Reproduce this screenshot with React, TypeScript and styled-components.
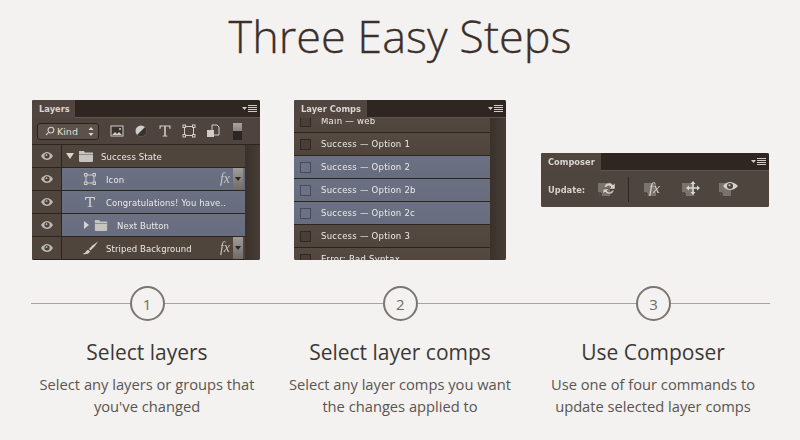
import React from "react";
import styled, { createGlobalStyle } from "styled-components";

const Global = createGlobalStyle`
  html, body { margin: 0; padding: 0; background: #f3f2f0; }
  body { width: 800px; height: 440px; overflow: hidden; font-family: "Open Sans", "Liberation Sans", sans-serif; }
`;

const Page = styled.main`
  width: 800px;
  height: 440px;
  display: flex;
  flex-direction: column;
`;

const Title = styled.h1`
  margin: 0;
  height: 100px;
  padding-top: 6px;
  box-sizing: border-box;
  text-align: center;
  font-size: 45px;
  line-height: 60px;
  font-weight: 300;
  -webkit-text-stroke: 0.3px #3a2f2a;
  color: #3a2f2a;
`;

const PanelRow = styled.section`
  display: flex;
  align-items: center;
  height: 160px;
  padding-left: 32px;
  gap: 34px;
`;

const Panel = styled.div<{ $w: number; $h: number; $ml?: number }>`
  width: ${(p) => p.$w}px;
  height: ${(p) => p.$h}px;
  margin-left: ${(p) => p.$ml ?? 0}px;
  display: flex;
  flex-direction: column;
  flex: none;
  background: linear-gradient(90deg, #4a4038, #463c35);
  border-radius: 2px;
  overflow: hidden;
  font-family: "DejaVu Sans", "Liberation Sans", sans-serif;
  color: #e4e1de;
  filter: blur(0.3px);
`;

const TabStrip = styled.div`
  height: 18px;
  flex: none;
  display: flex;
  align-items: stretch;
  justify-content: space-between;
  background: #2f2622;
  border-bottom: 1px solid #5f564f;
  box-sizing: border-box;
`;

const Tab = styled.div<{ $w: number }>`
  width: ${(p) => p.$w}px;
  background: #50463f;
  margin-bottom: -1px;
  font-size: 8.3px;
  font-weight: 700;
  line-height: 18px;
  padding-left: 7px;
  box-sizing: border-box;
  color: #d8d5d2;
  white-space: nowrap;
`;

const MenuGlyph = styled.svg`
  width: 16px;
  height: 8px;
  margin: 5px 2px 0 0;
`;

const Toolbar = styled.div`
  height: 27px;
  flex: none;
  display: flex;
  align-items: center;
  padding-left: 5px;
  background: #4e443d;
  border-bottom: 1px solid #2c2521;
  box-sizing: border-box;
`;

const KindButton = styled.div`
  width: 62px;
  height: 17px;
  box-sizing: border-box;
  display: flex;
  align-items: center;
  gap: 2px;
  padding: 0 4px 0 7px;
  background: #5d5249;
  border: 1px solid #29211d;
  border-radius: 3px;
  font-size: 9.5px;
  color: #e0ddda;
  margin-right: 11px;
`;

const Spacer = styled.span`
  flex: 1;
`;

const ToolIcon = styled.svg`
  width: 14px;
  height: 14px;
  margin-right: 10px;
  flex: none;
`;

const ToggleTrack = styled.div`
  width: 9px;
  height: 17px;
  display: flex;
  flex-direction: column;
  background: #2c2622;
  margin-left: 3px;
`;

const ToggleKnob = styled.div`
  height: 8px;
  background: linear-gradient(#a8a4a0, #8a8580);
`;

const ListWrap = styled.div`
  flex: 1;
  display: flex;
  min-height: 0;
  overflow: hidden;
`;

const List = styled.div<{ $w: number; $shift?: number }>`
  width: ${(p) => p.$w}px;
  flex: none;
  margin-top: ${(p) => p.$shift ?? 0}px;
`;

const LayerRow = styled.div<{ $sel?: boolean }>`
  height: 23px;
  display: flex;
  box-sizing: border-box;
  border-bottom: 1px solid #2b2522;
  background: ${(p) => (p.$sel ? "linear-gradient(#6b7082, #676c7e)" : "#50453d")};
`;

const EyeCell = styled.div`
  width: 30px;
  flex: none;
  background: #50453d;
  border-right: 1px solid #2b2522;
  display: flex;
  align-items: center;
  justify-content: center;
  box-sizing: border-box;
`;

const LayerBody = styled.div<{ $pl: number }>`
  flex: 1;
  min-width: 0;
  display: flex;
  align-items: center;
  padding-left: ${(p) => p.$pl}px;
  font-size: 8.5px;
  color: #eceae8;
  white-space: nowrap;
`;

const Name = styled.span<{ $ml: number }>`
  margin-left: ${(p) => p.$ml}px;
  letter-spacing: 0.1px;
  padding-top: 2px;
`;

const Fx = styled.span`
  font-family: "Liberation Serif", serif;
  font-style: italic;
  font-size: 14px;
  color: #c9c5c2;
  margin-right: 3px;
`;

const FxStub = styled.div`
  width: 10px;
  height: 100%;
  flex: none;
  margin-right: 2px;
  background: linear-gradient(#a09c98, #6f6a66);
  display: flex;
  align-items: center;
  justify-content: center;
`;

const CompRow = styled.div<{ $sel?: boolean }>`
  height: 23px;
  display: flex;
  align-items: center;
  gap: 10px;
  padding-left: 6px;
  box-sizing: border-box;
  border-bottom: 1px solid #2b2522;
  background: ${(p) => (p.$sel ? "linear-gradient(#6b7082, #676c7e)" : "linear-gradient(#554a42, #50453d)")};
  font-size: 8.5px;
  letter-spacing: 0.25px;
  color: #eceae8;
  white-space: nowrap;
`;

const Check = styled.div<{ $sel?: boolean }>`
  width: 11px;
  height: 11px;
  flex: none;
  border: 1px solid ${(p) => (p.$sel ? "#464b5a" : "#2f2824")};
  background: ${(p) => (p.$sel ? "#6d7386" : "#493f38")};
  box-sizing: border-box;
`;

const ScrollGutter = styled.div`
  flex: 1;
  background: linear-gradient(90deg, #3a312b, #473d36);
`;

const ComposerBody = styled.div`
  flex: 1;
  display: flex;
  align-items: center;
  padding-left: 7px;
  background: #4e453e;
`;

const UpdateLabel = styled.span`
  font-size: 8.3px;
  font-weight: 700;
  color: #d4d0cd;
  width: 48px;
  padding-top: 2px;
`;

const ComposerIcon = styled.svg<{ $mr: number }>`
  width: 22px;
  height: 20px;
  margin-right: ${(p) => p.$mr}px;
  flex: none;
`;

const Divider = styled.div`
  width: 1px;
  height: 25px;
  background: #2c2521;
  margin-right: 13px;
`;

const Rail = styled.div`
  position: relative;
  margin: 26px 30px 0 31px;
  height: 35px;
  display: flex;
  justify-content: space-between;
  padding: 0 99px 0 98.5px;
  flex: none;
  &::before {
    content: "";
    position: absolute;
    left: 0;
    right: 0;
    top: 17px;
    height: 1px;
    background: #a8a39e;
  }
`;

const Circle = styled.div`
  position: relative;
  width: 35px;
  height: 35px;
  box-sizing: border-box;
  border: 2px solid #7c7570;
  border-radius: 50%;
  background: #f3f2f0;
  display: flex;
  align-items: center;
  justify-content: center;
  font-size: 15px;
  color: #6f6a65;
`;

const Steps = styled.section`
  display: grid;
  grid-template-columns: repeat(3, 253px);
  justify-content: center;
  margin-top: 17px;
`;

const Step = styled.article`
  text-align: center;
`;

const StepTitle = styled.h2`
  margin: 0 0 7px;
  font-size: 21px;
  line-height: 28px;
  font-weight: 400;
  color: #3d3836;
`;

const StepText = styled.p`
  margin: 0;
  font-size: 14.7px;
  line-height: 22px;
  color: #5a5552;
`;

const Menu = () => (
  <MenuGlyph viewBox="0 0 16 8">
    <path d="M0 2h5L2.500 5z" fill="#cfccc9" />
    <path d="M6 .5h9M6 2.500h9M6 4.500h9M6 6.500h9" stroke="#cfccc9" strokeWidth="1" />
  </MenuGlyph>
);

const Eye = () => (
  <svg width="14" height="10" viewBox="0 0 14 10">
    <path d="M1 5c2-3 4-4 6-4s4 1 6 4c-2 3-4 4-6 4S3 8 1 5z" fill="#bdb9b5" />
    <circle cx="7" cy="4.800" r="2.600" fill="#4a403a" />
    <circle cx="6.500" cy="4.200" r="0.900" fill="#bdb9b5" />
  </svg>
);

const Folder = ({ w = 14 }: { w?: number }) => (
  <svg width={w} height="12" viewBox="0 0 16 12" preserveAspectRatio="none">
    <path d="M1 1h5l1 1.400h8V11a1 1 0 0 1-1 1H2a1 1 0 0 1-1-1z" fill="#c6c3c0" />
    <path d="M1 4.500h14" stroke="#8f8b87" strokeWidth="1" />
  </svg>
);

const LeadGap = styled.span<{ $w: number }>`
  width: ${(p) => p.$w}px;
  flex: none;
`;

const TransformIcon = ({ color = "#cfccc9" }: { color?: string }) => (
  <svg width="12" height="12" viewBox="0 0 12 12" fill="none" stroke={color}>
    <rect x="2" y="2" width="8" height="8" />
    {[[0.5, 0.5], [9, 0.5], [0.5, 9], [9, 9]].map(([x, y]) => (
      <rect key={`${x}-${y}`} x={x} y={y} width="2.500" height="2.500" fill="#6a7085" />
    ))}
  </svg>
);

const SmallTri = ({ dir }: { dir: "down" | "right" }) => (
  <svg width="8" height="8" viewBox="0 0 8 8" fill="#d6d3d0">
    <path d={dir === "down" ? "M0 1h8L4 7z" : "M1 0l5 4-5 4z"} />
  </svg>
);

const StubArrow = () => (
  <svg width="6" height="4" viewBox="0 0 6 4">
    <path d="M0 0h6L3 4z" fill="#2b2522" />
  </svg>
);

const BrushIcon = () => (
  <svg width="17" height="14" viewBox="0 0 17 14">
    <path d="M16 .5C12 3 9 5.500 7 8l1.500 1.500C11 7 14 4 16 .5z" fill="#d0cdca" />
    <path d="M6.300 8.700c-2 .2-2.300 2-3.300 3L.5 13c2.500.5 6.500.3 7.500-2.500z" fill="#d0cdca" />
  </svg>
);

const DocBase = () => (
  <>
    <path d="M2 4h12v13H5l-3-3z" fill="#7a726c" />
    <path d="M2 14h3v3" fill="none" stroke="#2f2824" strokeWidth="1" />
  </>
);

const layers = [
  { sel: false, pl: 4, name: "Success State", lead: <><SmallTri dir="down" /><LeadGap $w={4} /><Folder w={16} /></>, ml: 7, fx: false },
  { sel: true, pl: 22, name: "Icon", lead: <TransformIcon />, ml: 10, fx: true },
  { sel: true, pl: 22, name: "Congratulations! You have..", lead: <svg width="12" height="12" viewBox="0 0 12 12"><path d="M1 1h10v3h-.8l-.6-2H6.800v8.200l1.600.3v.5H3.600v-.5l1.600-.3V2H2.400l-.6 2H1z" fill="#cfccc9" /></svg>, ml: 10, fx: false },
  { sel: true, pl: 21, name: "Next Button", lead: <><SmallTri dir="right" /><LeadGap $w={3} /><Folder /></>, ml: 9, fx: false },
  { sel: false, pl: 20, name: "Striped Background", lead: <BrushIcon />, ml: 7, fx: true },
];

const comps = [
  { name: "Main — web", sel: false },
  { name: "Success — Option 1", sel: false },
  { name: "Success — Option 2", sel: true },
  { name: "Success — Option 2b", sel: true },
  { name: "Success — Option 2c", sel: true },
  { name: "Success — Option 3", sel: false },
  { name: "Error: Bad Syntax", sel: false },
];

const steps = [
  { n: 1, title: "Select layers", lines: ["Select any layers or groups that", "you've changed"] },
  { n: 2, title: "Select layer comps", lines: ["Select any layer comps you want", "the changes applied to"] },
  { n: 3, title: "Use Composer", lines: ["Use one of four commands to", "update selected layer comps"] },
];

export default function App() {
  return (
    <Page>
      <Global />
      <Title>Three Easy Steps</Title>
      <PanelRow>
        <Panel $w={228} $h={160}>
          <TabStrip>
            <Tab $w={43}>Layers</Tab>
            <Menu />
          </TabStrip>
          <Toolbar>
            <KindButton>
              <svg width="10" height="10" viewBox="0 0 11 11" fill="none" stroke="#d6d3d0" strokeWidth="1.200">
                <circle cx="6.500" cy="4.500" r="3.200" />
                <path d="M4 7L1 10" />
              </svg>
              Kind
              <Spacer />
              <svg width="6" height="9" viewBox="0 0 6 9" fill="#d6d3d0">
                <path d="M3 0l2.500 3h-5zM3 9L.5 6h5z" />
              </svg>
            </KindButton>
            <ToolIcon viewBox="0 0 14 14">
              <rect x="1" y="2" width="12" height="10" fill="#3a322d" stroke="#cfccc9" />
              <path d="M2 11l3-3 2 2 2-2 3 3z" fill="#cfccc9" />
              <circle cx="10" cy="5" r="1" fill="#cfccc9" />
            </ToolIcon>
            <ToolIcon viewBox="0 0 14 14">
              <circle cx="7" cy="7" r="5.500" fill="#cfccc9" />
              <path d="M11 3a5.500 5.500 0 0 1-8 8z" fill="#3a322d" />
            </ToolIcon>
            <ToolIcon viewBox="0 0 14 14">
              <path d="M1.500 1.500h11v3.500h-.8l-.7-2.400H7.800v8.800l1.700.3v.8H4.500v-.8l1.700-.3V2.600H3l-.7 2.400h-.8z" fill="#cfccc9" />
            </ToolIcon>
            <ToolIcon viewBox="0 0 14 14" fill="none" stroke="#cfccc9">
              <rect x="2.500" y="2.500" width="9" height="9" />
              <rect x="1" y="1" width="2.500" height="2.500" fill="#4e443d" />
              <rect x="10.500" y="1" width="2.500" height="2.500" fill="#4e443d" />
              <rect x="1" y="10.500" width="2.500" height="2.500" fill="#4e443d" />
              <rect x="10.500" y="10.500" width="2.500" height="2.500" fill="#4e443d" />
            </ToolIcon>
            <ToolIcon viewBox="0 0 14 14">
              <path d="M6 1h5l2 2v8H6z" fill="none" stroke="#cfccc9" />
              <rect x="1" y="6" width="7" height="7" fill="#cfccc9" />
            </ToolIcon>
            <ToggleTrack>
              <ToggleKnob />
            </ToggleTrack>
          </Toolbar>
          <ListWrap>
            <List $w={213}>
              {layers.map((l) => (
                <LayerRow key={l.name} $sel={l.sel}>
                  <EyeCell>
                    <Eye />
                  </EyeCell>
                  <LayerBody $pl={l.pl}>
                    {l.lead}
                    <Name $ml={l.ml}>{l.name}</Name>
                    {l.fx && (
                      <>
                        <Spacer />
                        <Fx>fx</Fx>
                        <FxStub>
                          <StubArrow />
                        </FxStub>
                      </>
                    )}
                  </LayerBody>
                </LayerRow>
              ))}
            </List>
            <ScrollGutter />
          </ListWrap>
        </Panel>
        <Panel $w={212} $h={160}>
          <TabStrip>
            <Tab $w={73}>Layer Comps</Tab>
            <Menu />
          </TabStrip>
          <ListWrap>
            <List $w={196} $shift={-8}>
              {comps.map((c) => (
                <CompRow key={c.name} $sel={c.sel}>
                  <Check $sel={c.sel} />
                  {c.name}
                </CompRow>
              ))}
            </List>
            <ScrollGutter />
          </ListWrap>
        </Panel>
        <Panel $w={228} $h={54} $ml={1}>
          <TabStrip>
            <Tab $w={60}>Composer</Tab>
            <Menu />
          </TabStrip>
          <ComposerBody>
            <UpdateLabel>Update:</UpdateLabel>
            <ComposerIcon $mr={10} viewBox="0 0 22 20">
              <DocBase />
              <path d="M8 8a5 5 0 0 1 9-2l2-2v6h-6l2-2a3 3 0 0 0-5 0.500zM18 11a5 5 0 0 1-9 2l-2 2V10h6l-2 2a3 3 0 0 0 5-.5z" fill="#d4d1ce" stroke="#4e453e" strokeWidth="0.500" />
            </ComposerIcon>
            <Divider />
            <ComposerIcon $mr={16} viewBox="0 0 22 20">
              <DocBase />
              <text x="7" y="14" fontFamily="'Liberation Serif', serif" fontStyle="italic" fontSize="15" fill="#d4d1ce">fx</text>
            </ComposerIcon>
            <ComposerIcon $mr={15} viewBox="0 0 22 20">
              <DocBase />
              <path d="M13 2l2.500 3h-1.700v3.200H17V6.500l3 2.500-3 2.500V9.800h-3.200V13h1.700L13 16l-2.500-3h1.700V9.800H9v1.700L6 9l3-2.500v1.700h3.200V5h-1.700z" fill="#d9d6d3" />
            </ComposerIcon>
            <ComposerIcon $mr={0} viewBox="0 0 22 20">
              <DocBase />
              <path d="M6 7c2.500-3 4.500-4 7-4s5 1 8 4c-3 3-5.500 4-8 4s-4.500-1-7-4z" fill="#d4d1ce" />
              <circle cx="13" cy="7" r="3" fill="#4e453e" />
              <circle cx="12.500" cy="6.300" r="1" fill="#d4d1ce" />
            </ComposerIcon>
          </ComposerBody>
        </Panel>
      </PanelRow>
      <Rail>
        {steps.map((s) => (
          <Circle key={s.n}>{s.n}</Circle>
        ))}
      </Rail>
      <Steps>
        {steps.map((s) => (
          <Step key={s.n}>
            <StepTitle>{s.title}</StepTitle>
            {s.lines.map((line) => (
              <StepText key={line}>{line}</StepText>
            ))}
          </Step>
        ))}
      </Steps>
    </Page>
  );
}
